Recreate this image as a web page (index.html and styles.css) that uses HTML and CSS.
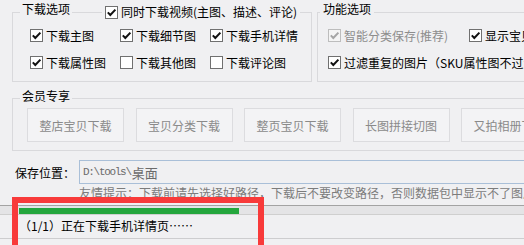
FILE: index.html
```html
<!DOCTYPE html>
<html lang="zh-CN">
<head>
<meta charset="utf-8">
<title>下载设置</title>
<link rel="stylesheet" href="styles.css">
</head>
<body>
<div class="app">
  <div class="top">
    <div class="group g1">
      <span class="legend l1">下载选项</span>
      <label class="legend-cb"><span class="cb"><svg viewBox="0 0 11 11"><path d="M1.8 5.4 L4.3 8 L9.4 2.6"/></svg></span>同时下载视频(主图、描述、评论)</label>
      <div class="grid grid1">
        <label class="item"><span class="cb"><svg viewBox="0 0 11 11"><path d="M1.8 5.4 L4.3 8 L9.4 2.6"/></svg></span>下载主图</label>
        <label class="item"><span class="cb"><svg viewBox="0 0 11 11"><path d="M1.8 5.4 L4.3 8 L9.4 2.6"/></svg></span>下载细节图</label>
        <label class="item"><span class="cb"><svg viewBox="0 0 11 11"><path d="M1.8 5.4 L4.3 8 L9.4 2.6"/></svg></span>下载手机详情</label>
        <label class="item"><span class="cb"><svg viewBox="0 0 11 11"><path d="M1.8 5.4 L4.3 8 L9.4 2.6"/></svg></span>下载属性图</label>
        <label class="item"><span class="cb"></span>下载其他图</label>
        <label class="item"><span class="cb"></span>下载评论图</label>
      </div>
    </div>
    <div class="group g2">
      <span class="legend l2">功能选项</span>
      <div class="grid grid2">
        <label class="item disabled"><span class="cb"><svg viewBox="0 0 11 11"><path d="M1.8 5.4 L4.3 8 L9.4 2.6"/></svg></span>智能分类保存(推荐)</label>
        <label class="item"><span class="cb"><svg viewBox="0 0 11 11"><path d="M1.8 5.4 L4.3 8 L9.4 2.6"/></svg></span>显示宝贝标题</label>
        <label class="item span2"><span class="cb"><svg viewBox="0 0 11 11"><path d="M1.8 5.4 L4.3 8 L9.4 2.6"/></svg></span>过滤重复的图片（SKU属性图不过滤）</label>
      </div>
    </div>
  </div>

  <div class="group member">
    <span class="legend lm">会员专享</span>
    <div class="btns">
      <div class="btn">整店宝贝下载</div>
      <div class="btn">宝贝分类下载</div>
      <div class="btn">整页宝贝下载</div>
      <div class="btn">长图拼接切图</div>
      <div class="btn">又拍相册下载</div>
    </div>
  </div>

  <div class="save-row">
    <span class="save-label">保存位置：</span>
    <div class="path"><span class="mono">D:\tools\</span><span class="cjk">桌面</span></div>
  </div>
  <div class="hint">友情提示：下载前请先选择好路径，下载后不要改变路径，否则数据包中显示不了图片</div>

  <div class="status">
    <div class="track"><div class="fill" style="width:220px"></div></div>
    <div class="status-text">（1/1）正在下载手机详情页……</div>
  </div>

  <div class="annot"></div>
</div>
</body>
</html>
```

FILE: styles.css
```css
html, body {
  margin: 0;
  padding: 0;
}
body {
  width: 524px;
  height: 245px;
  overflow: hidden;
  background: #f0f0f2;
  font-family: "Noto Sans CJK SC", "Microsoft YaHei", sans-serif;
  font-size: 12px;
  color: #000;
}
.app {
  position: relative;
  height: 245px;
  padding-top: 12px;
  box-sizing: border-box;
}
.top {
  display: flex;
  gap: 5px;
  padding-left: 12px;
}
.group {
  position: relative;
  border: 1px solid #d9d9dc;
  box-sizing: border-box;
  flex-shrink: 0;
}
.g1 {
  width: 300px;
  padding: 14px 0 11px 17px;
}
.g2 {
  width: 300px;
  padding: 14px 0 11px 10px;
}
.legend {
  position: absolute;
  top: -12px;
  line-height: 16px;
  padding: 0 2px;
  background: #f0f0f2;
  white-space: nowrap;
}
.l1 { left: 7px; }
.l2 { left: 2px; padding: 0 3px; }
.lm { left: 7px; top: -11px; }
.legend-cb {
  position: absolute;
  left: 89px;
  top: -9px;
  display: flex;
  align-items: center;
  gap: 3px;
  padding: 0 3px;
  line-height: 16px;
  background: #f0f0f2;
  white-space: nowrap;
}
.grid {
  display: grid;
  row-gap: 11px;
}
.grid1 { grid-template-columns: 90px 90px 90px; }
.grid2 { grid-template-columns: 141px 200px; }
.span2 { grid-column: 1 / span 2; }
.item {
  display: flex;
  align-items: center;
  gap: 3px;
  height: 16px;
  white-space: nowrap;
}
.cb {
  width: 13px;
  height: 13px;
  box-sizing: border-box;
  border: 1px solid #707070;
  background: #fff;
  display: flex;
  align-items: center;
  justify-content: center;
  flex-shrink: 0;
}
.cb svg {
  width: 11px;
  height: 11px;
  display: block;
}
.cb path {
  fill: none;
  stroke: #111;
  stroke-width: 2;
}
.disabled { color: #8d8d8d; }
.disabled .cb {
  border-color: #bdbdbd;
  background: #f4f4f4;
}
.disabled .cb path { stroke: #a5a5a5; }

.member {
  margin: 16px 0 0 12px;
  width: 560px;
  padding: 9px 0 8px 14px;
}
.btns {
  display: flex;
  gap: 11.5px;
}
.btn {
  width: 97px;
  height: 34px;
  box-sizing: border-box;
  border: 1px solid #dcdcdf;
  background: #f3f3f5;
  color: #8a8a8a;
  display: flex;
  align-items: center;
  justify-content: center;
  flex-shrink: 0;
}

.save-row {
  display: flex;
  align-items: center;
  margin-top: 9px;
  padding-left: 15px;
}
.save-label {
  width: 64px;
  flex-shrink: 0;
}
.path {
  width: 500px;
  height: 24px;
  box-sizing: border-box;
  border: 1px solid #a9bfd8;
  padding-left: 3px;
  display: flex;
  align-items: center;
  color: #6b6b6b;
  flex-shrink: 0;
}
.mono {
  font-family: "Liberation Mono", monospace;
  font-size: 11px;
  letter-spacing: -1.3px;
}
.cjk {
  font-size: 13px;
  margin-left: 1px;
}
.hint {
  margin-top: 1px;
  padding-left: 79px;
  line-height: 16px;
  color: #7c7c7c;
  white-space: nowrap;
}

.status {
  margin-top: 4px;
  width: 524px;
}
.track {
  height: 10px;
  box-sizing: border-box;
  border-top: 1px solid #a3a3a3;
  border-bottom: 1px solid #cfcfcf;
  background: #e4e4e6;
  padding: 2px 0 0 19px;
}
.fill {
  height: 6px;
  background: #24a63d;
}
.status-text {
  height: 23px;
  line-height: 22px;
  padding-left: 19px;
  border-bottom: 1px solid #cdcdcf;
  white-space: nowrap;
}
.annot {
  position: absolute;
  left: 12px;
  top: 197px;
  width: 252px;
  height: 60px;
  box-sizing: border-box;
  border: 6px solid #f83a3a;
  pointer-events: none;
}
```
